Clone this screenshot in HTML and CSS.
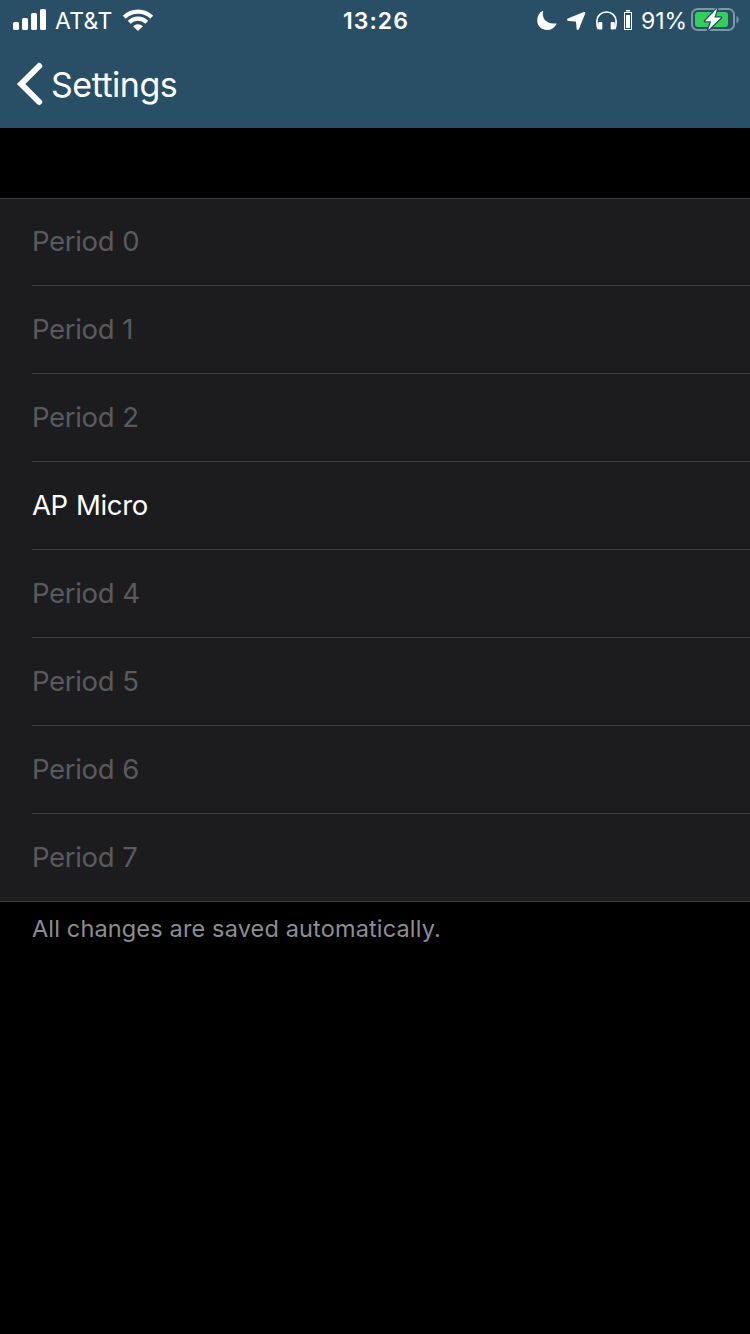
FILE: index.html
```html
<!DOCTYPE html>
<html lang="en">
<head>
<meta charset="utf-8">
<title>Settings</title>
<link rel="stylesheet" href="styles.css">
</head>
<body>
<header class="header">
  <div class="status">
    <div class="status-left">
      <svg class="signal" width="34" height="22" viewBox="0 0 34 22" fill="#fff"><rect x="0" y="13" width="6" height="8" rx="1.5"/><rect x="9" y="9" width="6" height="12" rx="1.5"/><rect x="18" y="4" width="6" height="17" rx="1.5"/><rect x="27" y="0" width="6" height="21" rx="1.5"/></svg>
      <span class="carrier">AT&amp;T</span>
      <svg class="wifi" width="30" height="22" viewBox="0 0 30 22"><g fill="none" stroke="#fff"><path d="M1.3 8.2A19.4 19.4 0 0 1 28.7 8.2" stroke-width="4.2"/><path d="M6.2 13.3A12.4 12.4 0 0 1 23.8 13.3" stroke-width="4.1"/></g><path d="M10.1 17.2A7 7 0 0 1 19.9 17.2L15 22Z" fill="#fff"/></svg>
    </div>
    <span class="clock">13:26</span>
    <div class="status-right">
      <svg class="moon" width="20" height="20" viewBox="0 0 20 20"><path d="M6.2.3C4.5 6.2 8.4 13.7 18.9 12.4C19.5 12.3 19.6 12.8 19.2 13.5C17.4 17 14.2 19 10.3 19C4.6 19 .2 14.9.2 9.5C.2 5.3 2.2 1.8 5.4.1C5.9-.1 6.3-.1 6.2.3Z" fill="#fff"/></svg>
      <svg class="arrow" width="19" height="19" viewBox="0 0 19 19"><path d="M.8 6.6L16.8.1C18 -.3 18.6.5 18.2 1.6L12 17C11.4 18.4 9.7 18.3 9.6 16.9L9.1 10.4C9.1 9.9 8.8 9.6 8.3 9.5L1.3 8.9C-.1 8.8-.4 7.2.8 6.6Z" fill="#fff"/></svg>
      <svg class="phones" width="21" height="20" viewBox="0 0 21 20"><path d="M2.3 18C.4 14.8.9 11 .9 10A9.6 9 0 0 1 20.1 10C20.1 11 20.6 14.8 18.7 18" fill="none" stroke="#fff" stroke-width="1.7"/><rect x="2.2" y="11" width="4.1" height="7.5" rx="1" fill="#fff"/><rect x="14.7" y="11" width="4.1" height="7.5" rx="1" fill="#fff"/></svg>
      <svg class="cell" width="8" height="21" viewBox="0 0 8 21"><path d="M2 .8H6" stroke="#fff" stroke-width="1.5"/><rect x=".5" y="2.5" width="7" height="17" fill="none" stroke="#fff"/><rect x="2" y="5" width="4" height="13" fill="#fff"/></svg>
      <span class="percent">91%</span>
      <svg class="battery" width="48" height="24" viewBox="0 0 48 24"><rect x="1" y="1" width="42" height="21" rx="5.5" fill="none" stroke="#8196a5" stroke-width="2"/><path d="M45.5 8C48.5 9.5 48.5 14 45.5 15.5Z" fill="#8196a5"/><rect x="4" y="4" width="33" height="15" rx="3" fill="#30d158"/><path d="M26.2.3L14 13.2H20.2L17.2 22L30 9.6H23.4Z" fill="#fff" stroke="#284f66" stroke-width="2.6" stroke-linejoin="round" paint-order="stroke"/></svg>
    </div>
  </div>
  <nav class="nav">
    <svg class="back" width="26" height="44" viewBox="0 0 26 44"><path d="M22.2 4L4.2 22L22.2 40" fill="none" stroke="#fff" stroke-width="6" stroke-linecap="round" stroke-linejoin="miter"/></svg>
    <span class="title">Settings</span>
  </nav>
</header>
<main>
  <ul class="list">
    <li class="row"><span class="name">Period 0</span></li>
    <li class="row"><span class="name">Period 1</span></li>
    <li class="row"><span class="name">Period 2</span></li>
    <li class="row"><span class="name filled">AP Micro</span></li>
    <li class="row"><span class="name">Period 4</span></li>
    <li class="row"><span class="name">Period 5</span></li>
    <li class="row"><span class="name">Period 6</span></li>
    <li class="row"><span class="name">Period 7</span></li>
  </ul>
  <p class="note">All changes are saved automatically.</p>
</main>
</body>
</html>
```
FILE: styles.css
```css
* { box-sizing: border-box; }
body {
  margin: 0;
  min-height: 1334px;
  background: #000;
  color: #fff;
  font-family: Inter, "Liberation Sans", sans-serif;
  white-space: nowrap;
}
svg { display: block; flex: none; overflow: visible; }
.header { height: 128px; background: #284f66; }
.status {
  display: grid;
  grid-template-columns: 1fr 68px 1fr;
  height: 40px;
  padding: 0 11px 0 13px;
}
.status-left, .status-right { display: flex; align-items: flex-start; }
.status-right { justify-content: flex-end; }
.signal { margin-top: 9px; }
.carrier { width: 59px; margin: 6px 9px 0 8px; font-size: 23px; line-height: 30px; letter-spacing: .3px; }
.wifi { margin-top: 9px; }
.clock { margin-top: 6px; font-size: 23px; font-weight: 600; line-height: 30px; letter-spacing: 1.1px; text-align: center; }
.moon { margin: 11px 10px 0 0; }
.arrow { margin: 12px 10px 0 0; }
.phones { margin: 11px 7px 0 0; }
.cell { margin: 10px 9px 0 0; }
.percent { width: 47px; margin: 6px 3px 0 0; font-size: 23px; line-height: 30px; }
.battery { margin-top: 8px; }
.nav { display: flex; align-items: flex-start; padding-left: 17px; }
.back { margin-top: 22px; }
.title { margin: 24px 0 0 8px; font-size: 34px; line-height: 42px; letter-spacing: -.5px; }
.list {
  margin: 70px 0 0;
  padding: 0;
  list-style: none;
  background: #1c1c1e;
  border-top: 1px solid #3d3d41;
  border-bottom: 1px solid #3d3d41;
}
.row {
  display: flex;
  align-items: center;
  height: 88px;
  margin-left: 32px;
  border-bottom: 1px solid #3d3d41;
}
.row:first-child { height: 87px; }
.row:first-child .name { padding-bottom: 2px; }
.row:last-child { height: 87px; border-bottom: 0; }
.name { padding-bottom: 1px; color: #5a5a5e; font-size: 27.5px; line-height: 36px; letter-spacing: -.35px; word-spacing: .8px; }
.filled { color: #fff; }
.note { margin: 12px 0 0 32px; color: #8d8d93; font-size: 23.5px; line-height: 30px; letter-spacing: .15px; }
```
